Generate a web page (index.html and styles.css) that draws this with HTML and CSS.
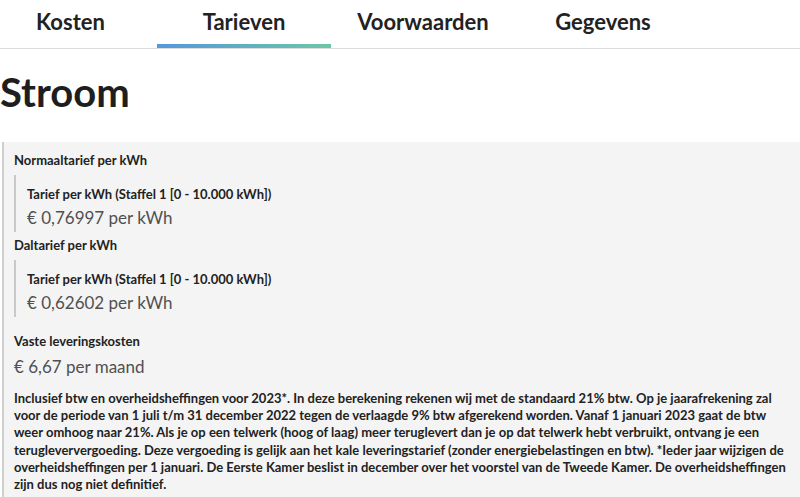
FILE: index.html
```html
<!DOCTYPE html>
<html lang="nl">
<head>
<meta charset="utf-8">
<title>Tarieven</title>
<link rel="stylesheet" href="styles.css">
</head>
<body>
<nav class="tabs">
  <a class="tab tab-kosten">Kosten</a>
  <a class="tab tab-tarieven active">Tarieven</a>
  <a class="tab tab-voorwaarden">Voorwaarden</a>
  <a class="tab tab-gegevens">Gegevens</a>
</nav>
<h1 class="title">Stroom</h1>
<section class="panel">
  <div class="label">Normaaltarief per kWh</div>
  <div class="tier">
    <div class="label">Tarief per kWh (Staffel 1 [0 - 10.000 kWh])</div>
    <div class="price">€ 0,76997 per kWh</div>
  </div>
  <div class="label label-next">Daltarief per kWh</div>
  <div class="tier">
    <div class="label">Tarief per kWh (Staffel 1 [0 - 10.000 kWh])</div>
    <div class="price">€ 0,62602 per kWh</div>
  </div>
  <div class="label label-fixed">Vaste leveringskosten</div>
  <div class="price price-fixed">€ 6,67 per maand</div>
  <p class="note">Inclusief btw en overheidsheffingen voor 2023*. In deze berekening rekenen wij met de standaard 21% btw. Op je jaarafrekening zal voor de periode van 1 juli t/m 31 december 2022 tegen de verlaagde 9% btw afgerekend worden. Vanaf 1 januari 2023 gaat de btw weer omhoog naar 21%. Als je op een telwerk (hoog of laag) meer teruglevert dan je op dat telwerk hebt verbruikt, ontvang je een terugleververgoeding. Deze vergoeding is gelijk aan het kale leveringstarief (zonder energiebelastingen en btw). *Ieder jaar wijzigen de overheidsheffingen per 1 januari. De Eerste Kamer beslist in december over het voorstel van de Tweede Kamer. De overheidsheffingen zijn dus nog niet definitief.</p>
</section>
</body>
</html>
```

FILE: styles.css
```css
html, body {
  margin: 0;
  padding: 0;
  background: #ffffff;
  font-family: Lato, "Open Sans", "Liberation Sans", sans-serif;
  color: #222222;
  overflow: hidden;
}

.tabs {
  display: flex;
  height: 48px;
  border-bottom: 1px solid #dcdcdc;
  margin-left: -16px;
}

.tab {
  position: relative;
  display: flex;
  align-items: center;
  justify-content: center;
  height: 48px;
  padding-bottom: 5px;
  box-sizing: border-box;
  font-size: 22px;
  font-weight: 700;
  color: #222222;
  text-decoration: none;
}

.tab-kosten { width: 173px; }
.tab-tarieven { width: 174px; }
.tab-voorwaarden { width: 184px; }
.tab-gegevens { width: 176px; }

.tab.active::after {
  content: "";
  position: absolute;
  left: 0;
  right: 0;
  bottom: 0;
  height: 4px;
  background: linear-gradient(90deg, #5597dc, #6cc6a6);
}

.title {
  margin: 19px 0 26px 0;
  font-size: 40px;
  line-height: 48px;
  font-weight: 700;
  color: #1e1e1e;
}

.panel {
  margin-left: 2px;
  border-left: 2px solid #cfcfcf;
  background: #f4f4f4;
  padding: 9px 4px 20px 10px;
  min-height: 400px;
}

.label {
  font-size: 13px;
  line-height: 18px;
  font-weight: 700;
  color: #222222;
}

.label-next { margin-top: 4px; }
.label-fixed { margin-top: 15px; }

.tier {
  margin-top: 6px;
  border-left: 2px solid #c9c9c9;
  padding: 10px 0 2px 11px;
}

.price {
  margin-top: 3px;
  font-size: 17px;
  line-height: 24px;
  color: #505050;
}

.price-fixed { margin-top: 5px; }

.note {
  margin: 11px 0 0 0;
  font-size: 13px;
  line-height: 17.2px;
  font-weight: 700;
  color: #222222;
}
```
